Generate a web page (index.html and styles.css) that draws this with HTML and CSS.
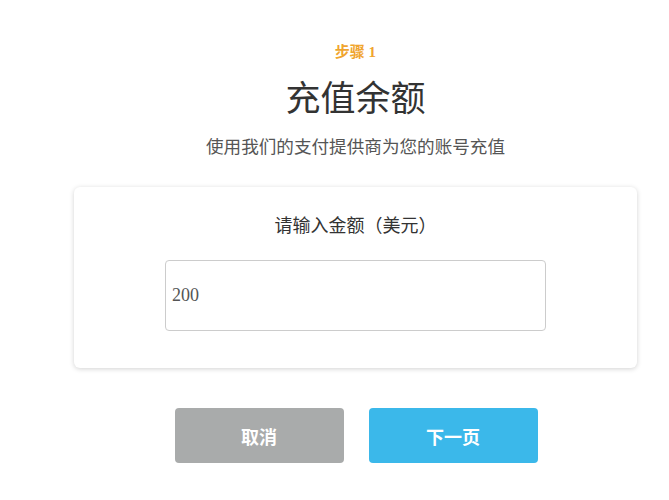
FILE: index.html
```html
<!DOCTYPE html>
<html lang="zh-CN">
<head>
  <meta charset="UTF-8">
  <title>充值余额</title>
  <link rel="stylesheet" href="styles.css">
</head>
<body>

<div class="page">
  <div class="step">步骤 1</div>
  <h1>充值余额</h1>
  <p class="subtitle">使用我们的支付提供商为您的账号充值</p>

  <div class="card">
    <label class="amount-label" for="amount">请输入金额（美元）</label>
    <input id="amount" class="amount" type="text" value="200">
  </div>

  <div class="actions">
    <button class="btn cancel">取消</button>
    <button class="btn next">下一页</button>
  </div>
</div>

</body>
</html>
```

FILE: styles.css
```css
body {
  margin: 0;
  padding: 0;
  background-color: #fff;
  font-family: "Liberation Serif", "Noto Sans CJK SC", serif;
  color: #333;
}

.page {
  width: 563px;
  margin-left: 74px;
  padding-top: 42px;
  text-align: center;
}

.step {
  color: #f0a52e;
  font-size: 15px;
  font-weight: bold;
  line-height: 20px;
}

h1 {
  font-size: 35px;
  font-weight: normal;
  margin: 16px 0 0;
  line-height: 44px;
  color: #333;
}

.subtitle {
  font-size: 17.6px;
  color: #555;
  margin: 12px 0 0;
  line-height: 26px;
}

.card {
  margin-top: 27px;
  background-color: #fff;
  border-radius: 6px;
  box-shadow: 0 1px 5px rgba(0, 0, 0, 0.18);
  padding: 26px 0 37px;
  display: flex;
  flex-direction: column;
  align-items: center;
}

.amount-label {
  font-size: 18px;
  line-height: 26px;
  color: #333;
}

.amount {
  margin-top: 21px;
  width: 381px;
  height: 71px;
  box-sizing: border-box;
  border: 1px solid #ccc;
  border-radius: 4px;
  padding: 0 6px;
  font-family: "Liberation Serif", serif;
  font-size: 18px;
  color: #555;
}

.actions {
  display: flex;
  justify-content: center;
  gap: 25px;
  margin-top: 40px;
  padding-left: 1px;
}

.btn {
  width: 169px;
  height: 55px;
  border: none;
  border-radius: 4px;
  color: #fff;
  font-family: "Liberation Serif", "Noto Sans CJK SC", serif;
  font-size: 18px;
  font-weight: bold;
  cursor: pointer;
}

.cancel {
  background-color: #a9abab;
}

.next {
  background-color: #3bb8ea;
}
```
